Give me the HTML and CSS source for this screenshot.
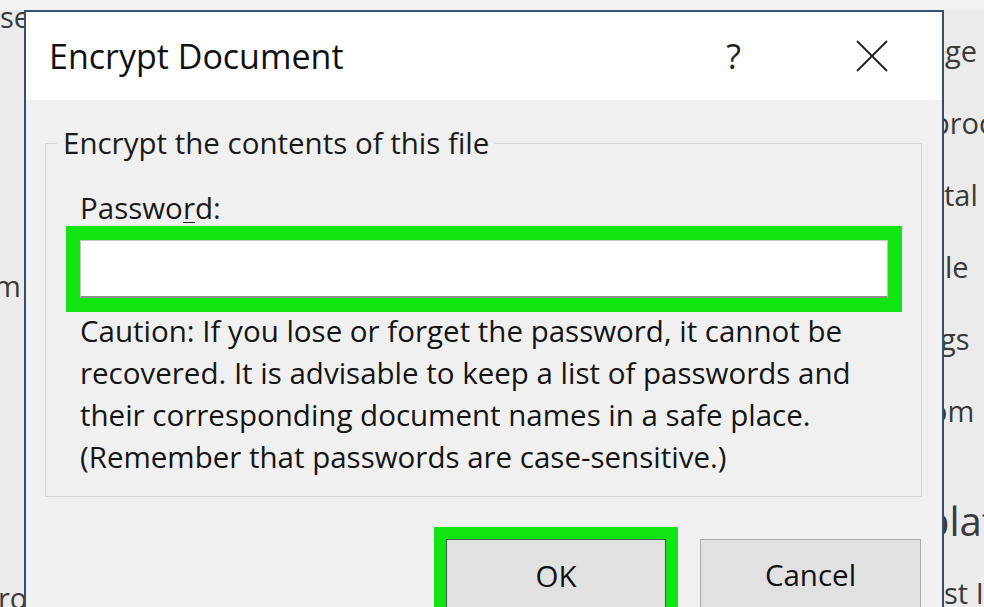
FILE: index.html
```html
<!DOCTYPE html>
<html lang="en">
<head>
<meta charset="utf-8">
<title>Encrypt Document</title>
<link rel="stylesheet" href="styles.css">
</head>
<body>
<div class="page">
  <div class="doc doc-left">
    <div class="line l1">se</div>
    <div class="line l2">m</div>
    <div class="line l3">ro</div>
  </div>

  <section class="dialog">
    <header class="titlebar">
      <h1 class="title">Encrypt Document</h1>
      <span class="help">?</span>
      <svg class="close" width="32" height="32" viewBox="0 0 32 32" aria-label="Close">
        <path d="M1 1 L31 31 M31 1 L1 31" stroke="#1e1e1e" stroke-width="1.8" fill="none"/>
      </svg>
    </header>
    <div class="body">
      <fieldset class="group">
        <legend class="legend">Encrypt the contents of this file</legend>
        <div class="fields">
          <label class="label" for="pw">Passwo<u>r</u>d:</label>
          <div class="highlight">
            <input class="input" id="pw" type="password">
          </div>
          <p class="caution">Caution: If you lose or forget the password, it cannot be<br>recovered. It is advisable to keep a list of passwords and<br>their corresponding document names in a safe place.<br>(Remember that passwords are case-sensitive.)</p>
        </div>
      </fieldset>
      <div class="buttons">
        <div class="highlight-btn"><button class="btn btn-default">OK</button></div>
        <button class="btn btn-cancel">Cancel</button>
      </div>
    </div>
  </section>

  <div class="doc doc-right">
    <div class="line r1">ge</div>
    <div class="line r2">proc</div>
    <div class="line r3">tal</div>
    <div class="line r4">le</div>
    <div class="line r5">gs</div>
    <div class="line r6">om</div>
    <div class="line heading">plat</div>
    <div class="line r8">st I</div>
  </div>
</div>
</body>
</html>
```

FILE: styles.css
```css
* { box-sizing: border-box; }

html, body {
  margin: 0;
  padding: 0;
  width: 984px;
  height: 607px;
  overflow: hidden;
}

body {
  font-family: "Open Sans", "Noto Sans", "DejaVu Sans", sans-serif;
  color: #1a1a1a;
  background: #ebebeb;
}

.page {
  display: flex;
  width: 984px;
  height: 607px;
  overflow: hidden;
  background: linear-gradient(#f3f3f3 0, #f3f3f3 10px, #ebebeb 10px);
}

/* background document fragments */
.doc {
  overflow: hidden;
  color: #3a3a3a;
  font-size: 29px;
  white-space: nowrap;
  flex: none;
}

.doc-left {
  width: 24px;
}

.doc-left .line { line-height: 36px; }
.doc-left .l1 { margin-top: -1px; margin-left: 0; }
.doc-left .l2 { margin-top: 233px; margin-left: -6px; }
.doc-left .l3 { margin-top: 276px; margin-left: -2px; }

.doc-right {
  width: 40px;
  padding-top: 15px;
}

.doc-right .line { line-height: 72px; }
.doc-right .r1 { margin-left: 1px; }
.doc-right .r2 { margin-left: -12px; }
.doc-right .r3 { margin-left: 0; }
.doc-right .r4 { margin-left: 1px; }
.doc-right .r5 { margin-left: -4px; }
.doc-right .r6 { margin-left: -14px; }
.doc-right .heading {
  font-size: 40px;
  line-height: 60px;
  margin-top: 44px;
  margin-left: -19px;
}
.doc-right .r8 { margin-top: 6px; margin-left: 0; }

/* dialog window */
.dialog {
  flex: none;
  width: 920px;
  height: 640px;
  margin-top: 10px;
  border: 2px solid #34506f;
  border-bottom: none;
  background: #f0f0f0;
  display: flex;
  flex-direction: column;
}

.titlebar {
  flex: none;
  height: 88px;
  background: #ffffff;
  display: flex;
  align-items: center;
  padding: 0 54px 0 23px;
}

.title {
  flex: 1;
  margin: 0;
  font-size: 34px;
  font-weight: 400;
  line-height: 46px;
  color: #111;
}

.help {
  font-size: 34px;
  line-height: 46px;
  color: #222;
  margin-right: 2px;
}

.close {
  flex: none;
  margin-left: 113px;
}

.body {
  flex: 1;
  padding: 22px 20px 0 19px;
}

.group {
  margin: 0;
  padding: 0 19px 18px 11px;
  border: 1px solid #d6d6d6;
  min-width: 0;
}

.legend {
  padding: 0 6px;
  font-size: 29.5px;
  line-height: 42px;
  color: #1a1a1a;
}

.fields {
  padding-left: 23px;
}

.label {
  display: block;
  margin-top: 26px;
  font-size: 29.5px;
  line-height: 36px;
  color: #1a1a1a;
}

.label u {
  text-decoration-thickness: 1px;
  text-underline-offset: 3px;
}

.highlight {
  margin-left: -14px;
  border: 14px solid #12e412;
  background: #12e412;
}

.input {
  display: block;
  width: 100%;
  height: 58px;
  margin: 0;
  padding: 0 8px;
  border: 1px solid #c4c4c4;
  border-bottom: 2px solid #8e8e8e;
  background: #ffffff;
  outline: none;
  font: inherit;
}

.caution {
  margin: -2px 0 0;
  font-size: 29.5px;
  line-height: 42px;
  color: #141414;
}

.buttons {
  display: flex;
  justify-content: flex-end;
  align-items: flex-start;
  gap: 22px;
  margin-top: 30px;
  padding-right: 1px;
}

.highlight-btn {
  border: 12px solid #12e412;
  border-bottom: none;
}

.btn {
  display: block;
  width: 220px;
  height: 70px;
  margin: 0;
  padding: 0;
  font-family: inherit;
  font-size: 29.5px;
  color: #111;
  background: #e1e1e1;
  border: 1px solid #adadad;
  border-bottom: none;
}

.btn-default {
  border-color: #3e5a4a;
  padding-top: 1px;
}

.btn-cancel {
  width: 221px;
  margin-top: 12px;
  padding-top: 0;
}
```
